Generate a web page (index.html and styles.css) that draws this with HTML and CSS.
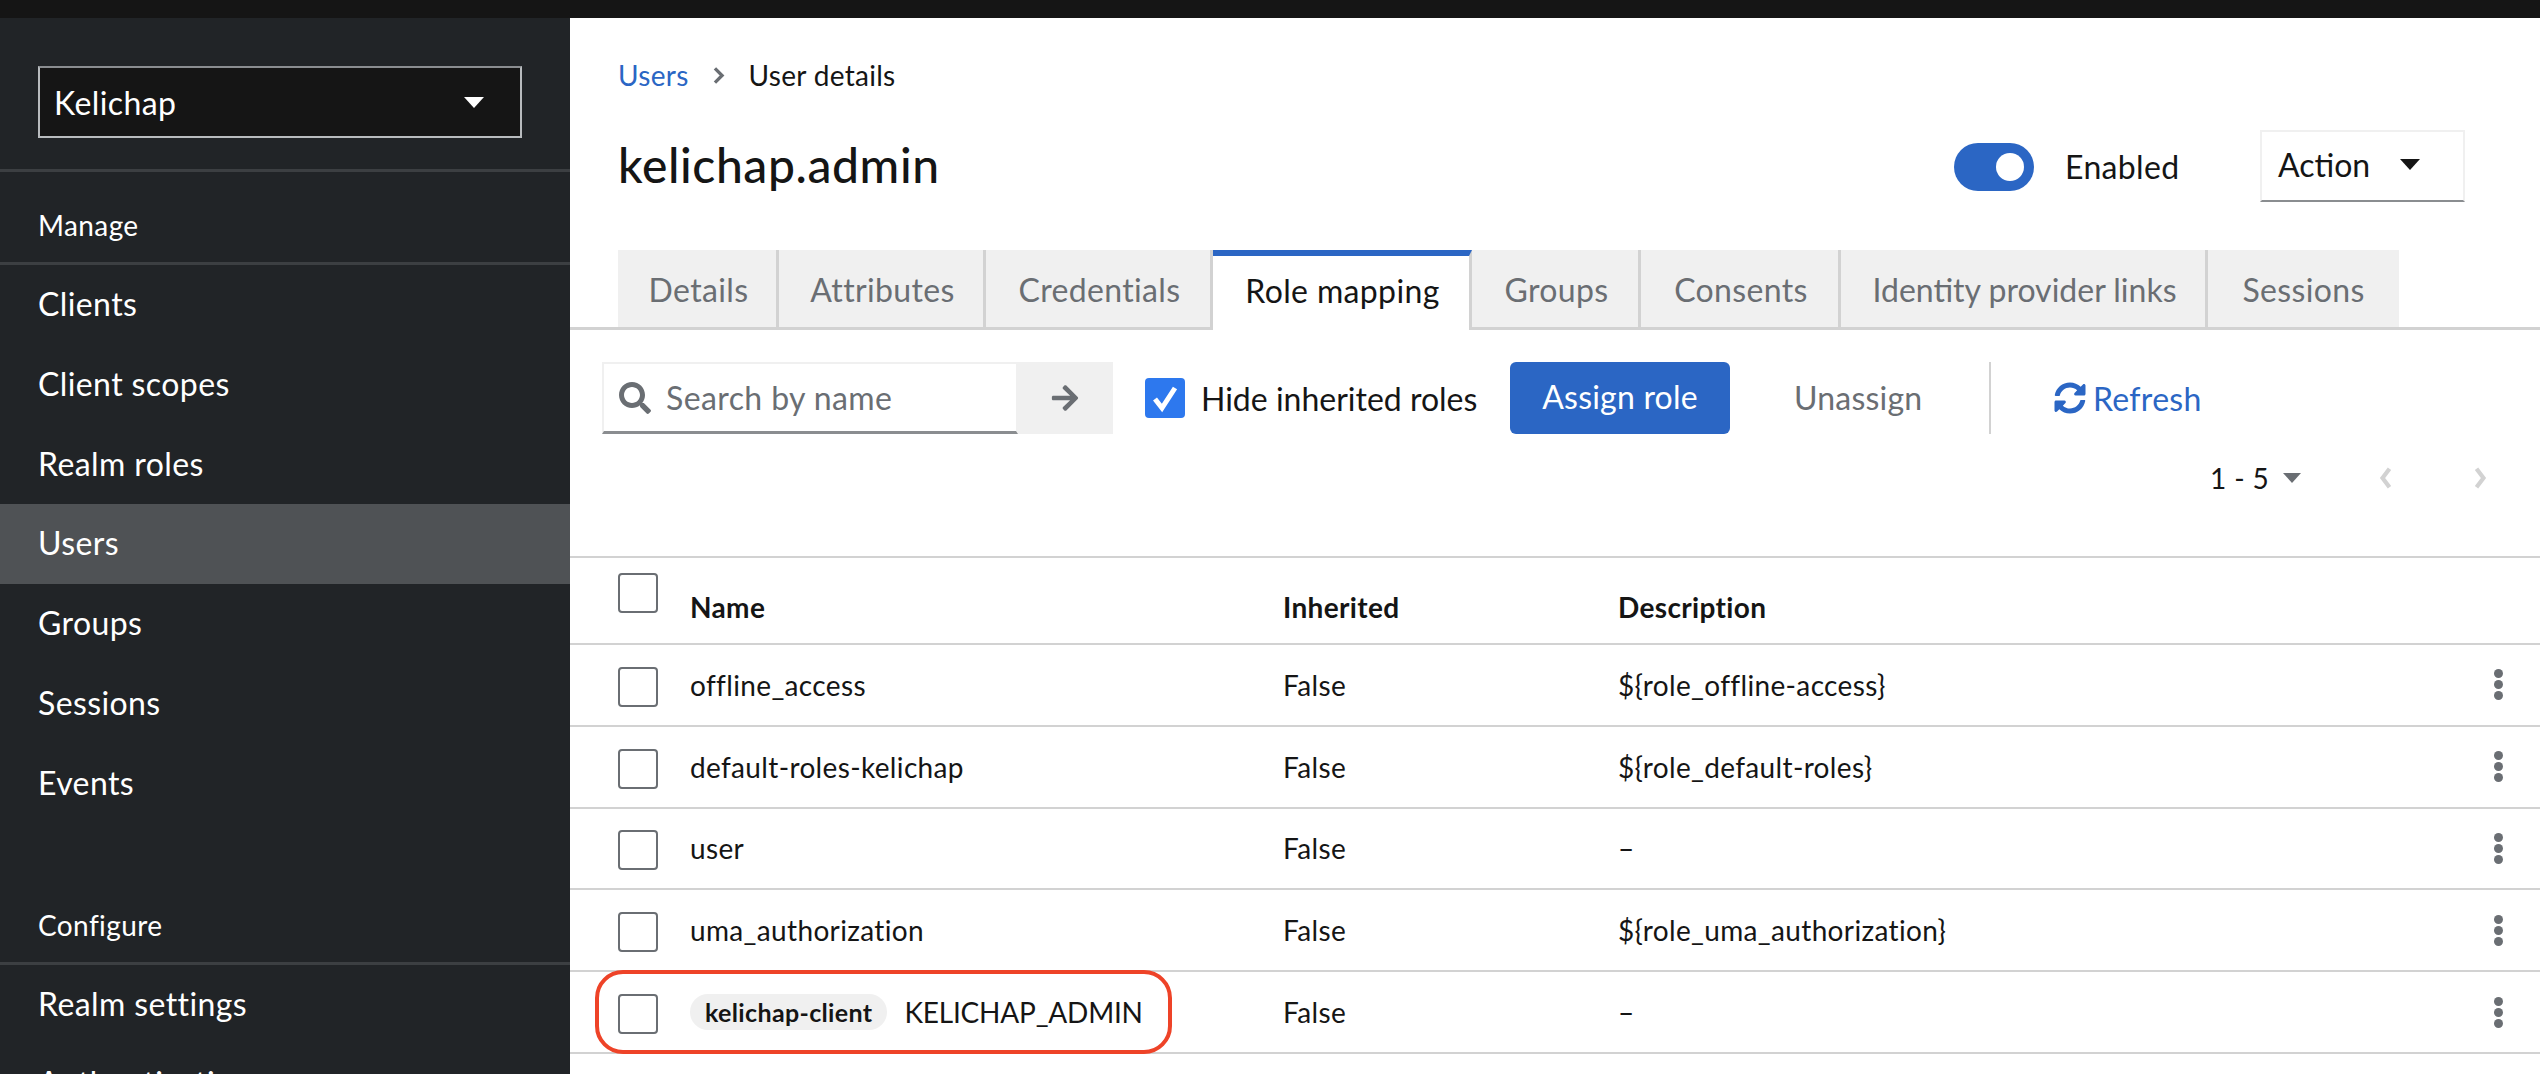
FILE: index.html
```html
<!DOCTYPE html>
<html lang="en">

<head>
    <meta charset="UTF-8">
    <title>Keycloak - User details</title>
    <link rel="stylesheet" href="styles.css">
</head>

<body>
    <div class="topbar"></div>
    <div class="app">
        <nav class="sidebar">
            <div class="realm-area">
                <div class="realm-select">
                    <span>Kelichap</span>
                    <span class="caret caret-white"></span>
                </div>
            </div>
            <div class="nav-title">Manage</div>
            <ul class="nav-list">
                <li>Clients</li>
                <li>Client scopes</li>
                <li>Realm roles</li>
                <li class="current">Users</li>
                <li>Groups</li>
                <li>Sessions</li>
                <li>Events</li>
            </ul>
            <div class="nav-title nav-title-second">Configure</div>
            <ul class="nav-list">
                <li>Realm settings</li>
                <li>Authentication</li>
            </ul>
        </nav>

        <main class="content">
            <div class="breadcrumb">
                <a class="link">Users</a>
                <svg class="crumb-sep" viewBox="0 0 10 16"><path d="M2 2l6 6-6 6" fill="none" stroke="#6a6e73" stroke-width="2.8"/></svg>
                <span>User details</span>
            </div>

            <div class="title-row">
                <h1>kelichap.admin</h1>
                <div class="switch"><span class="knob"></span></div>
                <span class="switch-label">Enabled</span>
                <div class="action-btn">
                    <span>Action</span>
                    <span class="caret caret-dark"></span>
                </div>
            </div>

            <div class="tabs">
                <div class="tab">Details</div>
                <div class="tab">Attributes</div>
                <div class="tab">Credentials</div>
                <div class="tab active">Role mapping</div>
                <div class="tab">Groups</div>
                <div class="tab">Consents</div>
                <div class="tab tab-long">Identity provider links</div>
                <div class="tab">Sessions</div>
            </div>

            <div class="toolbar">
                <div class="search">
                    <svg class="search-icon" viewBox="0 0 512 512"><path fill="#6a6e73" d="M505 442.7L405.3 343c-4.5-4.5-10.6-7-17-7H372c27.6-35.3 44-79.7 44-128C416 93.1 322.9 0 208 0S0 93.1 0 208s93.1 208 208 208c48.3 0 92.7-16.4 128-44v16.3c0 6.4 2.5 12.5 7 17l99.7 99.7c9.4 9.4 24.6 9.4 33.9 0l28.3-28.3c9.4-9.4 9.4-24.6.1-34zM208 336c-70.7 0-128-57.2-128-128 0-70.7 57.2-128 128-128 70.7 0 128 57.2 128 128 0 70.7-57.2 128-128 128z"/></svg>
                    <span>Search by name</span>
                </div>
                <div class="search-go">
                    <svg class="arrow-icon" viewBox="0 0 448 512"><path fill="#6a6e73" d="M190.5 66.9l22.2-22.2c9.4-9.4 24.6-9.4 33.9 0L441 239c9.4 9.4 9.4 24.6 0 33.9L246.6 467.3c-9.4 9.4-24.6 9.4-33.9 0l-22.2-22.2c-9.5-9.5-9.3-25 .4-34.3L311.4 296H24c-13.3 0-24-10.7-24-24v-32c0-13.3 10.7-24 24-24h287.4L190.9 101.2c-9.8-9.3-10-24.8-.4-34.3z"/></svg>
                </div>
                <div class="check-on">
                    <svg viewBox="0 0 40 40"><path d="M10 21l7 9 13-20" fill="none" stroke="#fff" stroke-width="5"/></svg>
                </div>
                <span class="check-label">Hide inherited roles</span>
                <div class="btn-primary">Assign role</div>
                <div class="btn-plain">Unassign</div>
                <div class="tool-sep"></div>
                <div class="refresh">
                    <svg class="refresh-icon" viewBox="0 0 512 512"><path fill="#2b66c4" d="M370.72 133.28C339.458 104.008 298.888 87.962 255.848 88c-77.458.068-144.328 53.178-162.791 126.85-1.344 5.363-6.122 9.15-11.651 9.15H24.103c-7.498 0-13.194-6.807-11.807-14.176C33.933 94.924 134.813 8 256 8c66.448 0 126.791 26.136 171.315 68.685L463.03 40.97C478.149 25.851 504 36.559 504 57.941V192c0 13.255-10.745 24-24 24H345.941c-21.382 0-32.09-25.851-16.971-40.971l41.75-41.749zM32 296h134.059c21.382 0 32.09 25.851 16.971 40.971l-41.75 41.75c31.262 29.273 71.835 45.319 114.876 45.28 77.418-.07 144.315-53.144 162.787-126.849 1.344-5.363 6.122-9.15 11.651-9.15h57.304c7.498 0 13.194 6.807 11.807 14.176C478.067 417.076 377.187 504 256 504c-66.448 0-126.791-26.136-171.315-68.685L48.97 471.03C33.851 486.149 8 475.441 8 454.059V320c0-13.255 10.745-24 24-24z"/></svg>
                    <span>Refresh</span>
                </div>
            </div>

            <div class="pager">
                <span class="pager-count">1 - 5</span>
                <span class="caret caret-grey"></span>
                <svg class="chev chev-left" viewBox="0 0 12 22"><path d="M9 3L3 11l6 8" fill="none" stroke="#d2d2d2" stroke-width="3.6"/></svg>
                <svg class="chev" viewBox="0 0 12 22"><path d="M3 3l6 8-6 8" fill="none" stroke="#d2d2d2" stroke-width="3.6"/></svg>
            </div>

            <div class="table">
                <div class="row head">
                    <div class="box box-head"></div>
                    <div>Name</div>
                    <div>Inherited</div>
                    <div>Description</div>
                    <div></div>
                </div>
                <div class="row">
                    <div class="box"></div>
                    <div>offline_access</div>
                    <div>False</div>
                    <div>${role_offline-access}</div>
                    <div class="kebab"><i></i><i></i><i></i></div>
                </div>
                <div class="row">
                    <div class="box"></div>
                    <div>default-roles-kelichap</div>
                    <div>False</div>
                    <div>${role_default-roles}</div>
                    <div class="kebab"><i></i><i></i><i></i></div>
                </div>
                <div class="row">
                    <div class="box"></div>
                    <div>user</div>
                    <div>False</div>
                    <div>&ndash;</div>
                    <div class="kebab"><i></i><i></i><i></i></div>
                </div>
                <div class="row">
                    <div class="box"></div>
                    <div>uma_authorization</div>
                    <div>False</div>
                    <div>${role_uma_authorization}</div>
                    <div class="kebab"><i></i><i></i><i></i></div>
                </div>
                <div class="row marked">
                    <div class="highlight"></div>
                    <div class="box"></div>
                    <div class="name-chip"><span class="chip">kelichap-client</span><span class="role-name">KELICHAP_ADMIN</span></div>
                    <div>False</div>
                    <div>&ndash;</div>
                    <div class="kebab"><i></i><i></i><i></i></div>
                </div>
            </div>
        </main>
    </div>
</body>

</html>
```

FILE: styles.css
```css
* {
    box-sizing: border-box;
}

html,
body {
    margin: 0;
    height: 100%;
    overflow: hidden;
}

body {
    font-family: "Lato", "Liberation Sans", sans-serif;
    font-size: 32px;
    color: #151515;
    background: #fff;
}

.topbar {
    height: 18px;
    background: #151515;
}

.app {
    display: flex;
    height: 1056px;
}

/* sidebar */
.sidebar {
    width: 570px;
    flex: none;
    background: #212427;
    color: #fff;
    overflow: hidden;
    letter-spacing: 0.4px;
}

.realm-area {
    height: 154px;
    padding: 48px 48px 0 38px;
    border-bottom: 3px solid #3c3f42;
}

.realm-select {
    display: flex;
    justify-content: space-between;
    align-items: center;
    width: 484px;
    height: 72px;
    padding: 0 36px 0 14px;
    background: #151515;
    border: 2px solid #b8bbbe;
    border-top-color: #8a8d90;
}

.caret {
    display: inline-block;
    width: 0;
    height: 0;
    border-left: 10px solid transparent;
    border-right: 10px solid transparent;
}

.caret-white {
    border-top: 11px solid #fff;
}

.caret-dark {
    border-top: 11px solid #151515;
}

.caret-grey {
    border-left-width: 9px;
    border-right-width: 9px;
    border-top: 10px solid #6a6e73;
}

.nav-title {
    height: 93px;
    padding: 33px 0 0 38px;
    font-size: 28px;
    line-height: 40px;
    border-bottom: 3px solid #3c3f42;
}

.nav-title-second {
    height: 98px;
    margin-top: 43px;
    padding-top: 38px;
}

.nav-list {
    list-style: none;
    margin: 0;
    padding: 0;
}

.nav-list li {
    height: 79.8px;
    line-height: 78px;
    padding-left: 38px;
}

.nav-list li.current {
    background: #4f5255;
}

/* main */
.content {
    flex: 1;
    min-width: 0;
    overflow: hidden;
}

.breadcrumb {
    display: flex;
    align-items: center;
    height: 40px;
    margin-top: 37px;
    padding-left: 48px;
    font-size: 28px;
    letter-spacing: 0.3px;
}

.link {
    color: #2b66c4;
}

.crumb-sep {
    width: 13px;
    height: 19px;
    margin: 0 24px 0 23px;
}

.title-row {
    display: flex;
    align-items: center;
    height: 72px;
    margin-top: 35px;
    padding-left: 48px;
}

h1 {
    flex: 1;
    margin: 0 0 3px;
    font-size: 48px;
    font-weight: 500;
    letter-spacing: 0.6px;
}

.switch {
    display: flex;
    align-items: center;
    justify-content: flex-end;
    width: 80px;
    height: 48px;
    margin-top: 2px;
    padding-right: 10px;
    border-radius: 24px;
    background: #2b66c4;
}

.knob {
    width: 28px;
    height: 28px;
    border-radius: 50%;
    background: #fff;
}

.switch-label {
    width: 226px;
    padding-left: 31px;
    letter-spacing: 0.35px;
}

.action-btn {
    display: flex;
    align-items: center;
    width: 205px;
    height: 72px;
    margin-right: 75px;
    padding: 0 0 3px 16px;
    border: 2px solid #f0f0f0;
    border-bottom-color: #8a8d90;
}

.action-btn .caret {
    margin-left: 30px;
}

.tabs {
    display: grid;
    grid-template-columns: 161px 207px 227px 259px 169px 200px 367px 191px;
    height: 80px;
    margin-top: 48px;
    padding-left: 48px;
    box-shadow: inset 0 -3px 0 #d2d2d2;
}

.tab {
    height: 77px;
    padding-left: 3px;
    line-height: 79px;
    text-align: center;
    color: #6a6e73;
    background: #f0f0f0;
    border-right: 3px solid #d2d2d2;
    letter-spacing: 0.35px;
}

.tab:last-child {
    border-right: 0;
    padding-left: 0;
}

.tab-long {
    letter-spacing: 0;
}

.tab.active {
    height: 80px;
    color: #151515;
    background: #fff;
    border-top: 6px solid #2b66c4;
    line-height: 70px;
}

.toolbar {
    display: flex;
    align-items: center;
    height: 72px;
    margin-top: 32px;
    padding-left: 32px;
}

.search {
    display: flex;
    align-items: center;
    width: 416px;
    height: 72px;
    padding-left: 15px;
    color: #6a6e73;
    border: 2px solid #f0f0f0;
    border-bottom: 3px solid #8a8d90;
    letter-spacing: 0.4px;
}

.search-icon {
    width: 32px;
    height: 32px;
    margin-right: 15px;
}

.search-go {
    display: flex;
    align-items: center;
    justify-content: center;
    width: 95px;
    height: 72px;
    padding-right: 2px;
    background: #f0f0f0;
}

.arrow-icon {
    width: 30px;
    height: 30px;
}

.check-on {
    width: 40px;
    height: 40px;
    margin-left: 32px;
    border-radius: 4px;
    background: #2d78ee;
}

.check-label {
    width: 325px;
    padding-left: 16px;
}

.btn-primary {
    width: 220px;
    height: 72px;
    line-height: 70px;
    text-align: center;
    color: #fff;
    border-radius: 6px;
    background: #2b66c4;
    letter-spacing: 0.2px;
}

.btn-plain {
    width: 259px;
    padding: 0 0 2px 64px;
    color: #6a6e73;
    letter-spacing: 0.2px;
}

.tool-sep {
    width: 2px;
    height: 72px;
    background: #d2d2d2;
}

.refresh {
    display: flex;
    align-items: center;
    margin-left: 63px;
    color: #2b66c4;
    letter-spacing: 0.3px;
}

.refresh-icon {
    width: 32px;
    height: 32px;
    margin-right: 7px;
}

.pager {
    display: flex;
    align-items: center;
    height: 40px;
    margin-top: 24px;
    padding-left: 1640px;
}

.pager-count {
    width: 73px;
    font-size: 28px;
    letter-spacing: 0.4px;
}

.chev {
    width: 14px;
    height: 26px;
    margin-left: 80px;
}

.chev-left {
    margin-left: 78px;
}

/* table */
.table {
    margin-top: 58px;
    border-top: 2px solid #d2d2d2;
}

.row {
    position: relative;
    display: grid;
    grid-template-columns: 120px 593px 335px 1fr 84px;
    align-items: center;
    height: 81.8px;
    font-size: 28px;
    letter-spacing: 0.35px;
    border-bottom: 2px solid #d2d2d2;
}

.row.head {
    height: 87px;
    font-weight: 700;
    padding-top: 12px;
}

.box {
    width: 40px;
    height: 40px;
    margin: 4px 0 0 48px;
    background: #fff;
    border: 2px solid #6a6e73;
    border-radius: 4px;
}

.box-head {
    align-self: start;
    margin-top: 3px;
}

.name-chip {
    display: flex;
    align-items: center;
    gap: 17px;
}

.chip {
    padding: 0 15px;
    height: 36px;
    line-height: 36px;
    font-size: 25px;
    font-weight: 700;
    border-radius: 18px;
    background: #f0f0f0;
}

.role-name {
    letter-spacing: -0.2px;
}

.kebab {
    display: flex;
    flex-direction: column;
    align-items: center;
    gap: 2px;
}

.kebab i {
    display: block;
    width: 9px;
    height: 9px;
    border-radius: 50%;
    background: #6a6e73;
}

/* red annotation round the last row */
.highlight {
    position: absolute;
    top: -2px;
    bottom: -2px;
    left: 25px;
    width: 577px;
    border: 4px solid #ee4328;
    border-radius: 28px;
}
```
